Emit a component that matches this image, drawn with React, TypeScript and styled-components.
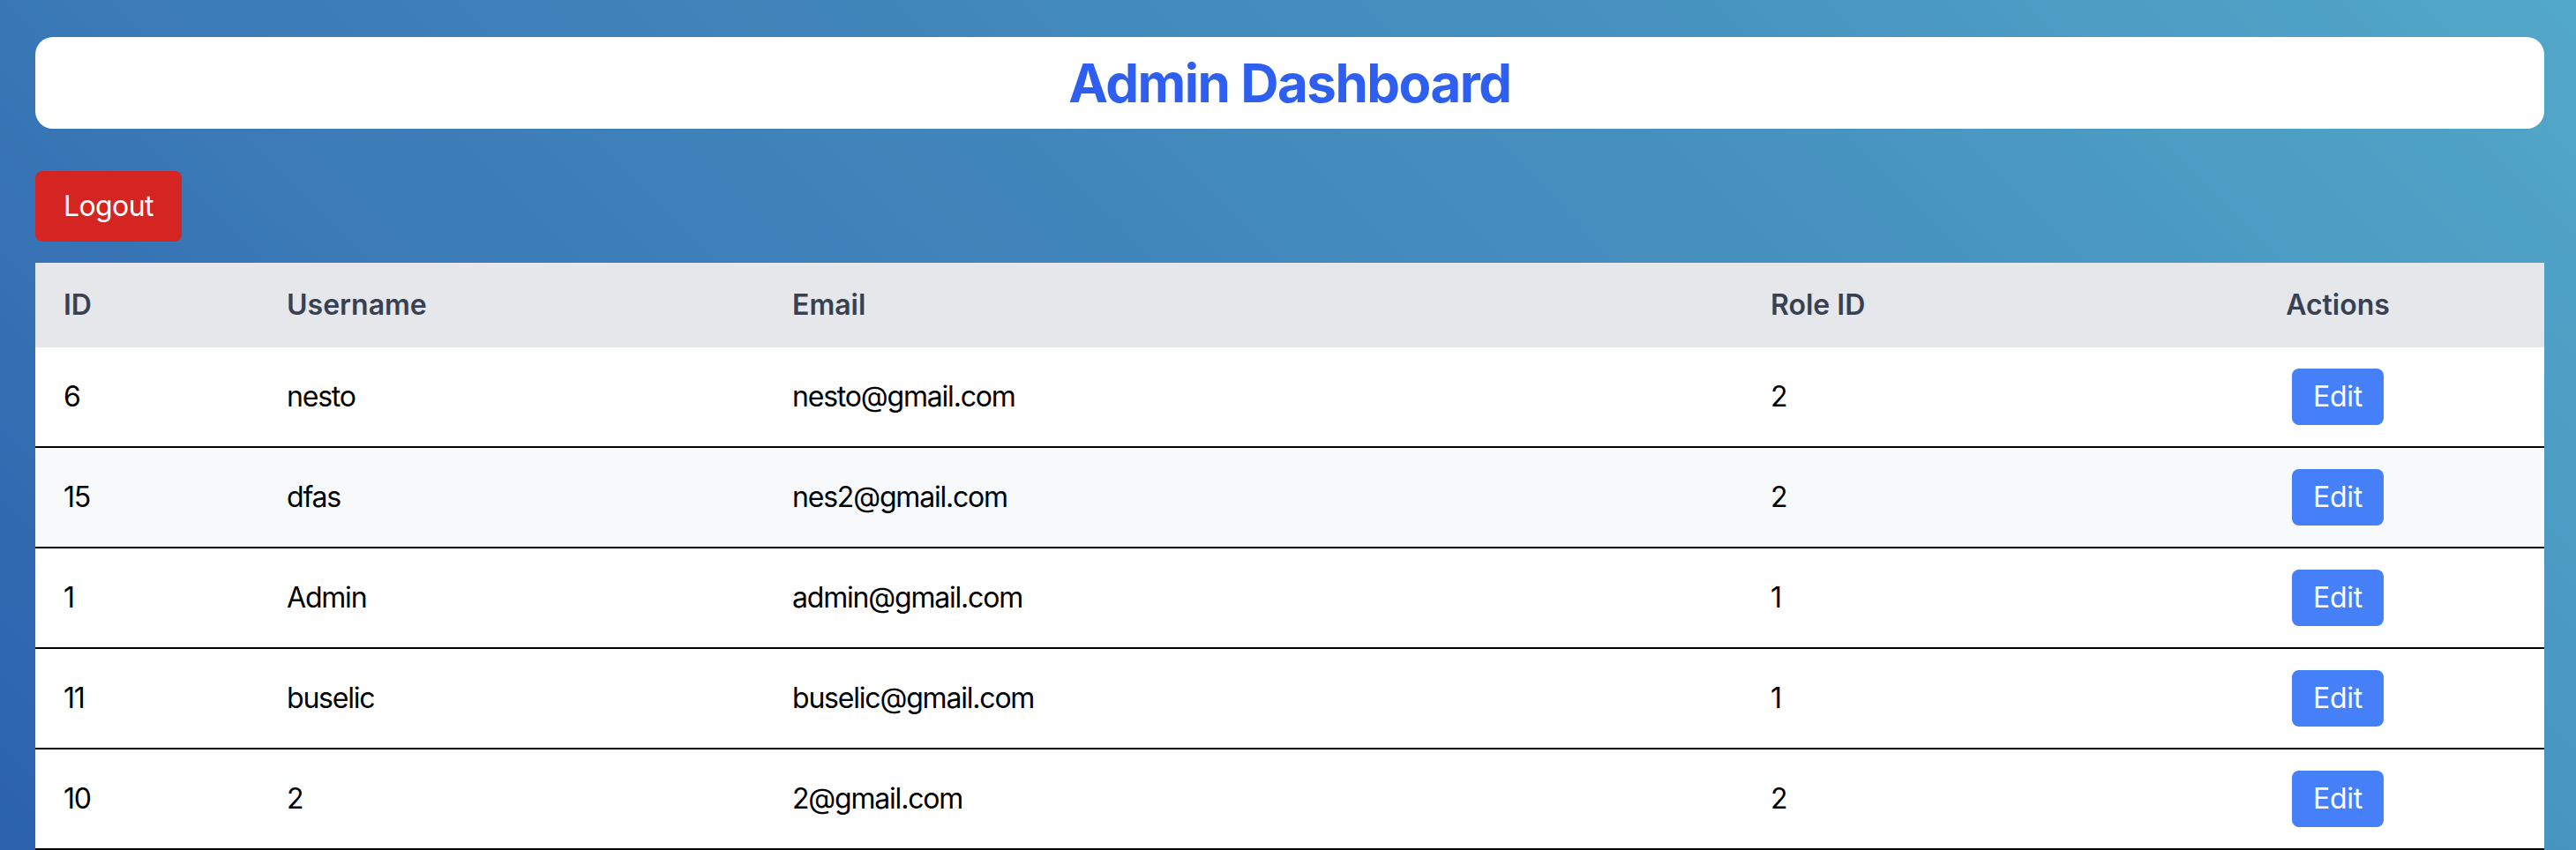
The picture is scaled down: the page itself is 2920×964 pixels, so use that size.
import React from "react";
import styled, { createGlobalStyle } from "styled-components";

const GlobalStyle = createGlobalStyle`
  html, body {
    margin: 0;
    padding: 0;
  }
  body {
    font-family: Inter, "Noto Sans", "Liberation Sans", sans-serif;
    min-height: 100vh;
    background: linear-gradient(45deg, #2c62ae 0%, #3b7ab7 28%, #4792c0 72%, #52a8c9 100%);
    background-attachment: fixed;
  }
`;

const Page = styled.div`
  min-height: 100vh;
  box-sizing: border-box;
  padding: 42px 36px 0 40px;
  display: flex;
  flex-direction: column;
  align-items: flex-start;
`;

const HeaderCard = styled.header`
  align-self: stretch;
  background: #ffffff;
  border-radius: 20px;
  padding: 16px;
  margin-bottom: 48px;
  display: flex;
  justify-content: center;
`;

const Title = styled.h1`
  margin: 0;
  font-size: 60px;
  line-height: 72px;
  font-weight: 700;
  color: #2e5ff0;
  letter-spacing: -1.5px;
`;

const LogoutButton = styled.button`
  font-family: inherit;
  font-size: 32px;
  line-height: 48px;
  letter-spacing: -0.6px;
  color: #ffffff;
  background: #d52522;
  border: none;
  border-radius: 8px;
  padding: 16px 32px;
  margin-bottom: 24px;
  cursor: pointer;
`;

const Table = styled.table`
  align-self: stretch;
  width: 100%;
  border-collapse: collapse;
  table-layout: fixed;
  background: #ffffff;
`;

const HeadRow = styled.tr`
  background: #e5e7eb;
`;

const HeadCell = styled.th<{ $center?: boolean }>`
  padding: 24px 32px;
  font-size: 32px;
  line-height: 48px;
  font-weight: 600;
  color: #374151;
  text-align: ${(p) => (p.$center ? "center" : "left")};
`;

const BodyRow = styled.tr<{ $shaded?: boolean }>`
  background: ${(p) => (p.$shaded ? "#f8f9fb" : "#ffffff")};
  border-bottom: 2px solid #000000;
`;

const Cell = styled.td<{ $center?: boolean }>`
  padding: 24px 32px;
  font-size: 32px;
  line-height: 48px;
  letter-spacing: -1.2px;
  color: #000000;
  text-align: ${(p) => (p.$center ? "center" : "left")};
  vertical-align: middle;
`;

const EditButton = styled.button`
  font-family: inherit;
  font-size: 32px;
  line-height: 48px;
  letter-spacing: -0.3px;
  color: #ffffff;
  background: #4580f9;
  border: none;
  border-radius: 8px;
  padding: 8px 24px;
  cursor: pointer;
`;

type User = { id: number; username: string; email: string; roleId: number };

const users: User[] = [
  { id: 6, username: "nesto", email: "nesto@gmail.com", roleId: 2 },
  { id: 15, username: "dfas", email: "nes2@gmail.com", roleId: 2 },
  { id: 1, username: "Admin", email: "admin@gmail.com", roleId: 1 },
  { id: 11, username: "buselic", email: "buselic@gmail.com", roleId: 1 },
  { id: 10, username: "2", email: "2@gmail.com", roleId: 2 },
];

export default function App() {
  return (
    <>
      <GlobalStyle />
      <Page>
        <HeaderCard>
          <Title>Admin Dashboard</Title>
        </HeaderCard>
        <LogoutButton>Logout</LogoutButton>
        <Table>
          <colgroup>
            <col style={{ width: 253 }} />
            <col style={{ width: 573 }} />
            <col style={{ width: 1109 }} />
            <col style={{ width: 441 }} />
            <col style={{ width: 468 }} />
          </colgroup>
          <thead>
            <HeadRow>
              <HeadCell>ID</HeadCell>
              <HeadCell>Username</HeadCell>
              <HeadCell>Email</HeadCell>
              <HeadCell>Role ID</HeadCell>
              <HeadCell $center>Actions</HeadCell>
            </HeadRow>
          </thead>
          <tbody>
            {users.map((u, i) => (
              <BodyRow key={u.id} $shaded={i === 1}>
                <Cell>{u.id}</Cell>
                <Cell>{u.username}</Cell>
                <Cell>{u.email}</Cell>
                <Cell>{u.roleId}</Cell>
                <Cell $center>
                  <EditButton>Edit</EditButton>
                </Cell>
              </BodyRow>
            ))}
          </tbody>
        </Table>
      </Page>
    </>
  );
}
